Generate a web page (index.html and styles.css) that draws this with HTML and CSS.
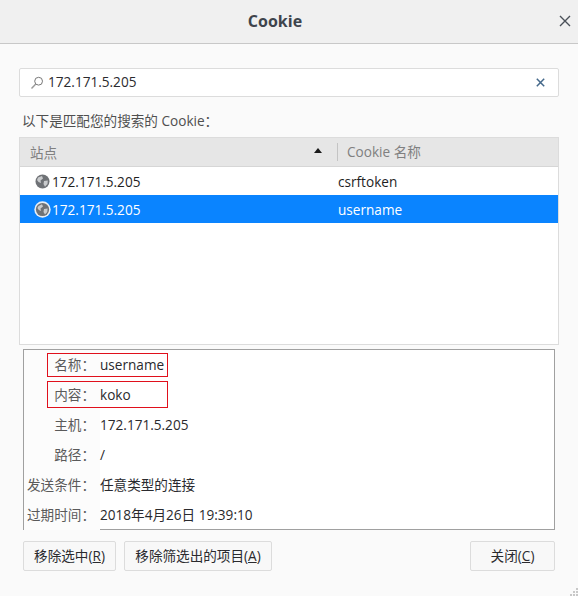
FILE: index.html
```html
<!DOCTYPE html>
<html lang="zh-CN">
<head>
  <meta charset="UTF-8" />
  <title>Cookie</title>
  <link rel="stylesheet" href="styles.css">
</head>
<body>
  <div class="dialog">
    <div class="titlebar">
      <span class="title">Cookie</span>
      <svg class="close-icon" width="12" height="12" viewBox="0 0 12 12"><path d="M1 1 L11 11 M11 1 L1 11" stroke="#4a5058" stroke-width="1.4" fill="none"/></svg>
    </div>

    <div class="content">
      <div class="search-box">
        <svg class="search-icon" width="14" height="14" viewBox="0 0 14 14"><circle cx="8.6" cy="5.2" r="3.9" stroke="#777" stroke-width="1" fill="none"/><path d="M5.8 8 L1.5 12.5" stroke="#999" stroke-width="1.4" fill="none"/></svg>
        <span class="search-text">172.171.5.205</span>
        <svg class="clear-icon" width="9" height="9" viewBox="0 0 9 9"><path d="M.8 .8 L8.2 8.2 M8.2 .8 L.8 8.2" stroke="#44688a" stroke-width="1.5" fill="none"/></svg>
      </div>

      <div class="hint">以下是匹配您的搜索的 Cookie：</div>

      <div class="tree">
        <div class="tree-head">
          <div class="col-site">站点<span class="sort-arrow"></span></div>
          <div class="col-name"><span class="col-name-text">Cookie 名称</span></div>
        </div>
        <div class="tree-row">
          <div class="col-site">
            <svg class="globe" width="15" height="15" viewBox="0 0 15 15"><circle cx="7.5" cy="7.5" r="7" fill="#6f7276"/><path d="M3 3.5 L7 2 L8 4.5 L5.5 6.5 L6 9 L3.5 8 L2 6 Z M9 7 L12.8 6.5 L12.5 10 L10 12.8 L8.5 10 Z" fill="#c9cbcd"/></svg>
            172.171.5.205
          </div>
          <div class="col-name">csrftoken</div>
        </div>
        <div class="tree-row selected">
          <div class="col-site">
            <svg class="globe" width="17" height="17" viewBox="0 0 17 17"><circle cx="8.5" cy="8.5" r="8.2" fill="#e8eef5"/><circle cx="8.5" cy="8.5" r="6.6" fill="#6f7276"/><path d="M4.5 5 L8 3.2 L9 5.5 L6.5 7.5 L7 10 L4.8 9 L3.4 7 Z M10 8 L13.6 7.5 L13.3 11 L11 13.6 L9.5 11 Z" fill="#c9cbcd"/></svg>
            172.171.5.205
          </div>
          <div class="col-name">username</div>
        </div>
      </div>

      <div class="details">
        <div class="detail-row">
          <span class="mark mark-name"></span>
          <div class="detail-label">名称：</div>
          <div class="detail-value">username</div>
        </div>
        <div class="detail-row">
          <span class="mark mark-value"></span>
          <div class="detail-label">内容：</div>
          <div class="detail-value">koko</div>
        </div>
        <div class="detail-row">
          <div class="detail-label">主机：</div>
          <div class="detail-value">172.171.5.205</div>
        </div>
        <div class="detail-row">
          <div class="detail-label">路径：</div>
          <div class="detail-value">/</div>
        </div>
        <div class="detail-row">
          <div class="detail-label">发送条件：</div>
          <div class="detail-value">任意类型的连接</div>
        </div>
        <div class="detail-row">
          <div class="detail-label">过期时间：</div>
          <div class="detail-value">2018年4月26日 19:39:10</div>
        </div>
      </div>

      <div class="buttons">
        <button class="btn btn-selected">移除选中(<u>R</u>)</button>
        <button class="btn btn-filtered">移除筛选出的项目(<u>A</u>)</button>
        <button class="btn btn-close">关闭(<u>C</u>)</button>
      </div>
    </div>
    <svg class="grip" width="9" height="9" viewBox="0 0 9 9"><path d="M7 1h2v2H7z M4 4h2v2H4z M7 4h2v2H7z M1 7h2v2H1z M4 7h2v2H4z M7 7h2v2H7z" fill="#c8c8c8"/></svg>
  </div>
</body>
</html>
```

FILE: styles.css
```css
html, body {
  margin: 0;
  padding: 0;
}
body {
  font-family: 'Open Sans', 'Noto Sans CJK SC', sans-serif;
  font-size: 13.6px;
  color: #2a2a2e;
  background: #fafafa;
}
.dialog {
  position: relative;
  width: 578px;
  height: 596px;
  overflow: hidden;
}
.titlebar {
  position: relative;
  height: 44px;
  box-sizing: border-box;
  background: #f0f0f0;
  border-bottom: 1px solid #c8c8c8;
  display: flex;
  align-items: center;
  justify-content: center;
  padding-right: 28px;
  padding-bottom: 2px;
}
.title {
  font-size: 16px;
  font-weight: 700;
  color: #3e444c;
}
.close-icon {
  position: absolute;
  right: 7px;
  top: 15px;
}
.content {
  padding: 24px 19px 0;
}
.search-box {
  height: 27px;
  background: #fff;
  border: 1px solid #dcdcdc;
  border-radius: 2px;
  display: flex;
  align-items: center;
  padding-left: 10px;
  padding-right: 13px;
}
.search-icon {
  margin-right: 4px;
}
.search-text {
  flex: 1;
  padding-bottom: 2px;
}
.hint {
  margin-top: 14px;
  padding-left: 3px;
  height: 26px;
  line-height: 20px;
  color: #4f4f4f;
}
.tree {
  height: 207px;
  background: #fff;
  border: 1px solid #dcdcdc;
  border-top: 0;
}
.tree-head {
  display: flex;
  align-items: center;
  background: #e6e6e6;
  border-top: 1px solid #dcdcdc;
  border-bottom: 1px solid #d6d6d6;
  color: #808080;
  box-sizing: border-box;
  height: 30px;
}
.tree-head .col-site {
  padding-left: 10px;
  position: relative;
}
.col-site {
  width: 318px;
  box-sizing: border-box;
  display: flex;
  align-items: center;
}
.col-name {
  flex: 1;
}
.col-name-text {
  display: block;
  border-left: 1px solid #c4c4c4;
  padding-left: 9px;
  margin-left: -1px;
  line-height: 18px;
}
.sort-arrow {
  position: absolute;
  right: 16px;
  top: 6px;
  width: 0;
  height: 0;
  border-left: 4px solid transparent;
  border-right: 4px solid transparent;
  border-bottom: 5px solid #1a1a1a;
}
.tree-row {
  height: 28px;
  display: flex;
  align-items: center;
  color: #1f1f1f;
}
.tree-row .col-site {
  padding-left: 15px;
}
.globe {
  margin-right: 2px;
  flex: none;
}
.tree-row.selected {
  background: #0a84ff;
  color: #fff;
}
.tree-row.selected .col-site {
  padding-left: 14px;
}
.tree-row.selected .globe {
  margin-right: 1px;
}
.details {
  margin: 4px 4px 0;
  height: 179px;
  background: #fff;
  border: 1px solid #a0a0a0;
}
.detail-row {
  position: relative;
  height: 30px;
  display: flex;
  line-height: 29px;
}
.detail-label {
  width: 76px;
  box-sizing: border-box;
  padding-right: 5px;
  text-align: right;
  white-space: nowrap;
  color: #5a5a5a;
  background: #fcfcfc;
  flex: none;
}
.mark {
  position: absolute;
  left: 23px;
  width: 121px;
  border: 1px solid #e0101c;
  box-sizing: border-box;
}
.mark-name {
  top: 3px;
  height: 24px;
}
.mark-value {
  top: 1px;
  height: 27px;
}
.buttons {
  display: flex;
  margin: 11px 4px 0;
  gap: 8px;
}
.btn {
  height: 30px;
  padding: 0 0 3px;
  background: #f8f8f8;
  border: 1px solid #dcdcdc;
  border-radius: 2px;
  font: inherit;
  color: #2a2a2e;
}
.btn-selected {
  width: 93px;
}
.btn-filtered {
  width: 148px;
}
.btn-close {
  width: 85px;
  margin-left: auto;
}
.grip {
  position: absolute;
  right: 0;
  bottom: 0;
}
```
